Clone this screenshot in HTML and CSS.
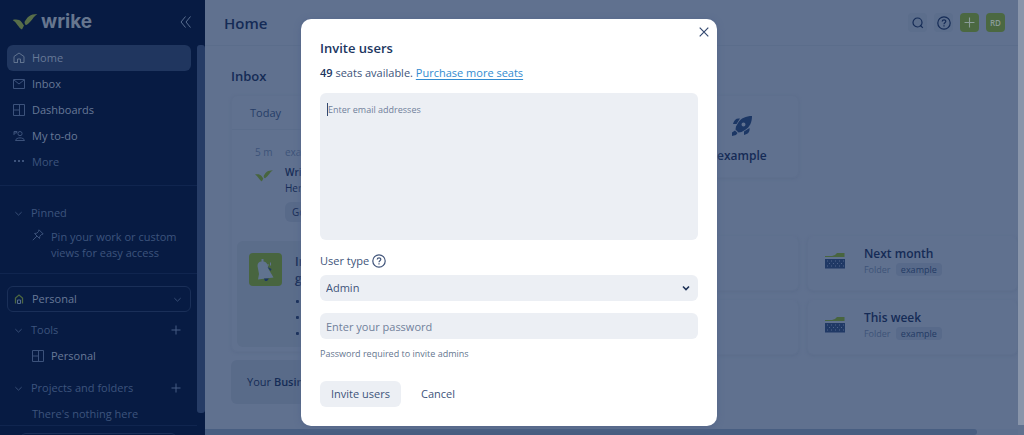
FILE: index.html
```html
<!DOCTYPE html>
<html lang="en">
<head>
<meta charset="utf-8">
<title>Wrike - Home</title>
<meta name="viewport" content="width=device-width, initial-scale=1">
<link rel="stylesheet" href="styles.css">
</head>
<body>
<svg class="symbols" aria-hidden="true">
  <symbol id="chevron" viewBox="0 0 10 10"><path d="M1.5 3.5 5 6.8 8.500 3.5" fill="none" stroke="currentColor"/></symbol>
  <symbol id="plus" viewBox="0 0 10 10"><path d="M5 0.500v9M0.500 5h9" fill="none" stroke="currentColor"/></symbol>
  <symbol id="board" viewBox="0 0 12 12"><path d="M.5.5h11v11H.5zM6.500.5v11M.5 6h6" fill="none" stroke="currentColor"/></symbol>
  <symbol id="check" viewBox="0 0 25 16"><path d="M0 6C4 5 7 5.500 9 8L11.500 11.500L9.500 15.500C6 14 4 8 0 6z"/><path d="M12 8C15 3 17 0 25 0C21 2 19 8 14 11L12.500 10.500z"/></symbol>
  <symbol id="folder" viewBox="0 0 20 16"><path class="green" d="M0 3h7l3-1 2-2h7.500v5H0z"/><path d="M0 4.500h20" stroke="#60718f"/><path class="navy" d="M0 6h20v9.500H0z"/><path d="M2 8h1M6 8h1M10 8h1M14 8h1M18 8h1M4 10.500h1M8 10.500h1M12 10.500h1M16 10.500h1M2 13h1M6 13h1M10 13h1M14 13h1M18 13h1" stroke="#50648b"/></symbol>
  <symbol id="help" viewBox="0 0 14 14"><circle cx="7" cy="7" r="6.200" fill="none" stroke="currentColor" stroke-width="1.200"/><path d="M5.200 5.500C5.300 3.200 8.900 3.300 8.800 5.400C8.700 6.700 7 6.700 7 8.200M7 9.300v1.300" fill="none" stroke="currentColor" stroke-width="1.200"/></symbol>
</svg>

<div class="app">
  <aside class="sidebar">
    <div class="brand">
      <svg class="brand-mark" viewBox="0 0 25 16"><use href="#check"/></svg>
      <span class="brand-name">wrike</span>
      <button class="plain collapse" aria-label="Collapse sidebar"><svg width="11" height="12" viewBox="0 0 11 12"><path d="M5.500.5 1 6l4.500 5.500M10.500.5 6 6l4.500 5.500" fill="none" stroke="currentColor"/></svg></button>
    </div>
    <div class="side-body">
      <div class="side-content">
        <nav class="nav">
          <a class="nav-item active" href="#home"><svg class="icon" viewBox="0 0 12 12"><path d="M1 10.500V4.500L6 1l5 3.500v6H8M1 10.500h3M4.500 11V7h3v4" fill="none" stroke="currentColor"/></svg>Home</a>
          <a class="nav-item" href="#inbox"><svg class="icon" viewBox="0 0 12 12"><path d="M.5 1.500h11v9H.5zM1 2l5 4 5-4" fill="none" stroke="currentColor"/></svg>Inbox</a>
          <a class="nav-item" href="#dashboards"><svg class="icon"><use href="#board"/></svg>Dashboards</a>
          <a class="nav-item" href="#todo"><svg class="icon" viewBox="0 0 12 12"><path d="M1 5V1.500h3L3.500 3H1M7 1.500a2.100 2.100 0 1 1 0 4.200a2.100 2.100 0 1 1 0-4.200M2.500 10.500C3 7 11 7 11.500 10.500z" fill="none" stroke="currentColor"/></svg>My to-do</a>
          <a class="nav-item muted" href="#more"><svg class="icon" viewBox="0 0 12 12"><path d="M1 5h2M5 5h2M9 5h2" stroke="currentColor" stroke-width="1.800"/></svg>More</a>
        </nav>
        <section class="pinned">
          <h2 class="side-title"><svg class="chev"><use href="#chevron"/></svg>Pinned</h2>
          <div class="pin-note"><svg class="icon" viewBox="0 0 12 12"><path d="M7 .8 11.200 5 9.500 5.500 7.800 7.300 7.500 9.500 2.500 4.500 4.800 4.200 6.500 2.500zM5 7 .8 11.200" fill="none" stroke="currentColor"/></svg><p>Pin your work or custom<br>views for easy access</p></div>
        </section>
        <button class="space"><svg class="icon" viewBox="0 0 12 12"><path d="M2.500 10.500V5L6 2l3.500 3v5.500" fill="none" stroke="#4c6640" stroke-width="1.300"/><path d="M4.500 10.500V7h3v3.500z" fill="none" stroke="#526990"/></svg><span>Personal</span><svg class="chev"><use href="#chevron"/></svg></button>
        <section class="group">
          <h2 class="side-title"><svg class="chev"><use href="#chevron"/></svg><span>Tools</span><button class="plain add" aria-label="Add tool"><svg class="plus"><use href="#plus"/></svg></button></h2>
          <a class="tool" href="#personal"><svg class="icon"><use href="#board"/></svg>Personal</a>
        </section>
        <section class="group">
          <h2 class="side-title"><svg class="chev"><use href="#chevron"/></svg><span>Projects and folders</span><button class="plain add" aria-label="Add project"><svg class="plus"><use href="#plus"/></svg></button></h2>
          <p class="empty">There's nothing here</p>
        </section>
        <div class="side-foot"><div class="foot-box"></div></div>
      </div>
      <div class="side-scroll"></div>
    </div>
  </aside>

  <main class="main">
    <header class="topbar">
      <h1>Home</h1>
      <div class="actions">
        <button class="action" aria-label="Search"><svg width="12" height="12" viewBox="0 0 12 12"><circle cx="5.500" cy="5.500" r="4.500" fill="none" stroke="currentColor" stroke-width="1.200"/><path d="m8 8 2.800 2.800" stroke="currentColor" stroke-width="1.200"/></svg></button>
        <button class="action" aria-label="Help"><svg width="14" height="14"><use href="#help"/></svg></button>
        <button class="action create" aria-label="Create"><svg width="11" height="11"><use href="#plus"/></svg></button>
        <button class="action avatar">RD</button>
      </div>
    </header>
    <div class="content">
      <section class="inbox">
        <h2>Inbox</h2>
        <div class="card feed">
          <div class="feed-head">Today</div>
          <div class="message">
            <span class="faint">5 m</span><span class="faint">example</span>
            <svg class="msg-mark" viewBox="0 0 25 16"><use href="#check"/></svg>
            <div class="msg-body"><strong>Wrike</strong><span>Here</span><button class="msg-button">Go</button></div>
          </div>
          <div class="notice">
            <svg width="33" height="33" viewBox="0 0 33 33"><rect width="33" height="33" rx="4" fill="#48653f"/><path d="M12.500 8.500V6h2v2.500C18 9 19 12 19.500 16L24.500 24.500 9 26.500 10 21 8.500 13C8.500 10 10 8.500 12.500 8.500z" fill="#60738f"/><path d="M15 25.500h5L18 28h-2zM18.500 14l4 2-1 2z" fill="#1d3764"/><path d="M21.500 9.500v3M19 11v2" stroke="#60738f" fill="none"/></svg>
            <div class="notice-text"><strong>In<br>g</strong><ul><li></li><li></li><li></li></ul></div>
          </div>
        </div>
        <div class="plan">Your <strong>Business</strong></div>
      </section>
      <section class="tiles">
        <a class="card space-tile" href="#example"><svg width="20" height="20" viewBox="0 0 20 20"><path fill="#1c3765" fill-rule="evenodd" d="M20 0C14 0 9 2 6 7L4 10.500 3.500 13.500 6.500 16.500 9.500 16 13 14C18 11 20 6 20 0zM11.500 6.500a2 2 0 1 1 0 4a2 2 0 1 1 0-4M8 2.500 4.500 8H1C2 4 4 2 8 2.500M17.500 12C18 16 16 18 12 19V15.500zM3 14.500 5.500 17 4 19 0 20V16.500z"/></svg><strong>example</strong></a>
        <div class="card folder blank"></div>
        <a class="card folder" href="#next-month"><svg width="20" height="16"><use href="#folder"/></svg><div><h3>Next month</h3><p>Folder <span class="tag">example</span></p></div></a>
        <div class="card folder blank"></div>
        <a class="card folder" href="#this-week"><svg width="20" height="16"><use href="#folder"/></svg><div><h3>This week</h3><p>Folder <span class="tag">example</span></p></div></a>
      </section>
    </div>
    <div class="bottom-scroll"><div class="bottom-thumb"></div></div>
  </main>
  <div class="page-scroll"></div>
</div>

<div class="overlay">
  <form class="modal" role="dialog" aria-labelledby="dialog-title">
    <button type="button" class="plain close" aria-label="Close"><svg width="10" height="10" viewBox="0 0 10 10"><path d="m.7.7 8.600 8.600M9.300.7.7 9.300" stroke="currentColor" stroke-width="1.200"/></svg></button>
    <h2 id="dialog-title">Invite users</h2>
    <p class="seats"><strong>49</strong> seats available. <a href="#seats">Purchase more seats</a></p>
    <div class="emails"><textarea aria-label="Email addresses" placeholder="Enter email addresses"></textarea><span class="caret"></span></div>
    <div class="type-label"><label for="user-type">User type</label><svg width="14" height="14"><use href="#help"/></svg></div>
    <div class="select"><select id="user-type"><option>Admin</option></select><svg width="8" height="6" viewBox="0 0 8 6"><path d="M1 1.500 4 4.500 7 1.500" fill="none" stroke="#1d3156" stroke-width="1.600"/></svg></div>
    <input class="password" type="password" aria-label="Password" aria-describedby="password-note" placeholder="Enter your password">
    <p class="note" id="password-note">Password required to invite admins</p>
    <div class="buttons"><button type="submit" class="submit">Invite users</button><button type="button" class="plain cancel">Cancel</button></div>
  </form>
</div>
</body>
</html>
```

FILE: styles.css
```css
* { box-sizing: border-box; }
body, h1, h2, h3, p, ul { margin: 0; padding: 0; }
body { font: 11px/16px "Open Sans", "Noto Sans", sans-serif; color: #152b56; background: #60718f; }
button, input, select, textarea { font: inherit; color: inherit; border: 0; margin: 0; }
button { cursor: pointer; }
a { color: inherit; text-decoration: none; }
strong { font-weight: 600; }
svg { flex: none; }
.symbols { position: absolute; width: 0; height: 0; }
.plain { background: none; padding: 0; display: flex; }
.app { display: flex; height: 100vh; overflow: hidden; }

.sidebar { display: flex; flex-direction: column; flex: 0 0 205px; background: #071b43; color: #677997; overflow: hidden; }
.brand { display: flex; align-items: center; flex: none; height: 45px; padding: 0 14px 2px 12px; }
.brand-mark { width: 26px; height: 16px; fill: #586e49; }
.brand-name { margin-left: 3px; font: 700 19px/24px Inter, sans-serif; color: #66768f; }
.collapse { margin-left: auto; color: #5b6f90; }
.side-body { display: flex; flex: 1; min-height: 0; }
.side-content { flex: 1; min-width: 0; overflow: hidden; }
.side-scroll { width: 8px; margin-bottom: 22px; border-radius: 3px; background: #263c66; }
.icon { width: 12px; height: 12px; color: #3c527b; }
.chev { width: 9px; height: 9px; color: #3c527b; }
.nav { padding: 0 6px 10px 7px; border-bottom: 1px solid #10254f; }
.nav-item { display: flex; align-items: center; gap: 7px; height: 26px; padding: 0 6px 1px; }
.active { padding-bottom: 0; background: #20365f; border-radius: 6px; }
.active .icon { color: #60738f; }
.muted, .side-title, .pin-note, .empty { color: #3d547d; }
.pinned { padding: 19px 14px 12px; border-bottom: 1px solid #10254f; }
.side-title { display: flex; align-items: center; gap: 8px; font: inherit; }
.pin-note { display: flex; gap: 7px; padding: 8px 0 0 18px; }
.space { display: flex; align-items: center; gap: 7px; width: 184px; height: 26px; margin: 12px 7px 0; padding: 0 8px 0 5px; background: none; border: 1px solid #1a2f58; border-radius: 6px; color: #677997; }
.space .chev, .add { margin-left: auto; }
.group { padding: 10px 16px 0 14px; }
.plus { width: 10px; height: 10px; color: #465c84; }
.tool { display: flex; align-items: center; gap: 7px; height: 26px; margin-top: 5px; padding-left: 18px; }
.group + .group { padding-top: 11px; }
.empty { padding: 10px 0 3px 18px; }
.side-foot { padding: 7px 20px 0; border-top: 1px solid #10254f; }
.foot-box { height: 26px; border: 1px solid #1a2f58; border-radius: 6px; }

.main { display: flex; flex: 1; flex-direction: column; min-width: 0; }
.topbar { display: flex; align-items: center; justify-content: space-between; flex: 0 0 46px; padding: 0 13px 0 19px; border-bottom: 1px solid #5b6d8b; }
.topbar h1 { font-size: 15px; line-height: 24px; font-weight: 600; }
.actions { display: flex; gap: 7px; }
.action { display: grid; place-items: center; width: 19px; height: 19px; padding: 0; border-radius: 4px; background: #5c6e8c; }
.create, .avatar { background: #4b6841; color: #8a9c99; }
.avatar { font-size: 8px; line-height: 12px; font-weight: 600; }
.content { display: grid; grid-template-columns: 13fr 17fr; gap: 28px; flex: 1; min-height: 0; padding: 20px 0 0 26px; overflow: hidden; }
.inbox h2 { font-size: 13px; line-height: 20px; font-weight: 600; margin-bottom: 9px; }
.card { border: 1px solid #5e6f8d; border-radius: 6px; box-shadow: 0 1px 3px #5b6c8a; }
.feed { padding-bottom: 4px; }
.feed-head { height: 34px; padding: 9px 18px 8px; border-bottom: 1px solid #5b6d8b; color: #263d67; }
.message { display: grid; grid-template-columns: 22px 1fr; column-gap: 8px; row-gap: 4px; padding: 14px 23px 19px; font-size: 10px; }
.faint { color: #3d5379; }
.msg-mark { width: 18px; height: 12px; margin-top: 6px; fill: #48653f; }
.msg-body { display: flex; flex-direction: column; align-items: flex-start; }
.msg-button { height: 20px; margin-top: 6px; padding: 0 7px; background: #586a89; border-radius: 6px; }
.notice { display: flex; gap: 13px; min-height: 104px; margin-left: 5px; padding: 12px; background: #5b6d8a; border-radius: 6px; }
.notice-text { font-size: 12px; line-height: 17px; }
.notice-text ul { display: flex; flex-direction: column; gap: 13px; margin: 13px 0 0 1px; list-style: none; }
.notice-text li { width: 3px; height: 3px; border-radius: 1px; background: currentColor; }
.plan { margin-top: 8px; padding: 14px 16px; background: #596b89; border-radius: 6px; }
.tiles { display: grid; grid-template-columns: 1fr 1fr; grid-template-rows: 132px 55px 55px; gap: 9px 8px; align-content: start; padding-top: 29px; }
.space-tile { grid-column: 1; justify-self: end; display: flex; flex-direction: column; align-items: center; gap: 12px; width: 114px; height: 83px; padding-top: 20px; font-size: 12px; }
.space-tile + .folder { grid-column: 1; }
.folder { display: flex; gap: 19px; padding: 8px 17px; border-top-color: #60718f; }
.folder > svg { margin-top: 8px; }
.folder h3 { font-size: 12px; line-height: 18px; font-weight: 600; }
.folder p { font-size: 9px; line-height: 13px; color: #3e5378; }
.tag { display: inline-block; margin-left: 3px; padding: 0 5px; background: #586a8a; border-radius: 4px; color: #233a64; }
.green { fill: #48653f; }
.navy { fill: #203965; }
.bottom-scroll { flex: none; height: 6px; background: #5d6f8e; }
.bottom-thumb { width: 95%; height: 6px; background: #485e81; border-radius: 0 3px 3px 0; }
.page-scroll { flex: 0 0 6px; margin-bottom: 10px; background: #8995aa; }

.overlay { position: absolute; inset: 0 6px 0 0; display: flex; justify-content: center; align-items: flex-start; padding-top: 19px; }
.modal { position: relative; width: 416px; max-width: 100%; padding: 19px 19px 19px 19px; border-radius: 10px; background: #fff; color: #40547a; box-shadow: 0 1px 6px #53658a; }
.close { position: absolute; top: 8px; right: 8px; color: #344970; }
.modal h2 { font-size: 13px; line-height: 20px; font-weight: 600; color: #20365f; }
.seats { margin-top: 7px; }
.seats strong { color: #20365f; }
.seats a { color: #328bd0; text-decoration: underline; text-underline-offset: 2px; }
.emails { position: relative; display: flex; margin-top: 12px; }
.emails textarea { width: 100%; height: 147px; padding: 9px 8px; resize: none; border-radius: 6px; background: #eceff4; font-size: 9px; }
::placeholder { color: #71819b; opacity: 1; }
.caret { position: absolute; top: 10px; left: 7px; width: 1px; height: 13px; background: #324970; }
.type-label { display: flex; align-items: center; gap: 3px; margin-top: 13px; }
.select { display: grid; align-items: center; margin-top: 6px; }
.select select, .select svg { grid-area: 1 / 1; }
.select select, .password { width: 100%; height: 26px; padding: 0 6px; appearance: none; border-radius: 6px; background: #eceff4; }
.select svg { justify-self: end; margin-right: 8px; pointer-events: none; }
.password { display: block; margin-top: 12px; }
.note { margin-top: 7px; font-size: 9px; color: #65768f; }
.buttons { display: flex; gap: 20px; margin-top: 19px; }
.submit { height: 26px; padding: 0 11px; background: #eceff4; border-radius: 6px; }
.cancel { align-items: center; }
```
